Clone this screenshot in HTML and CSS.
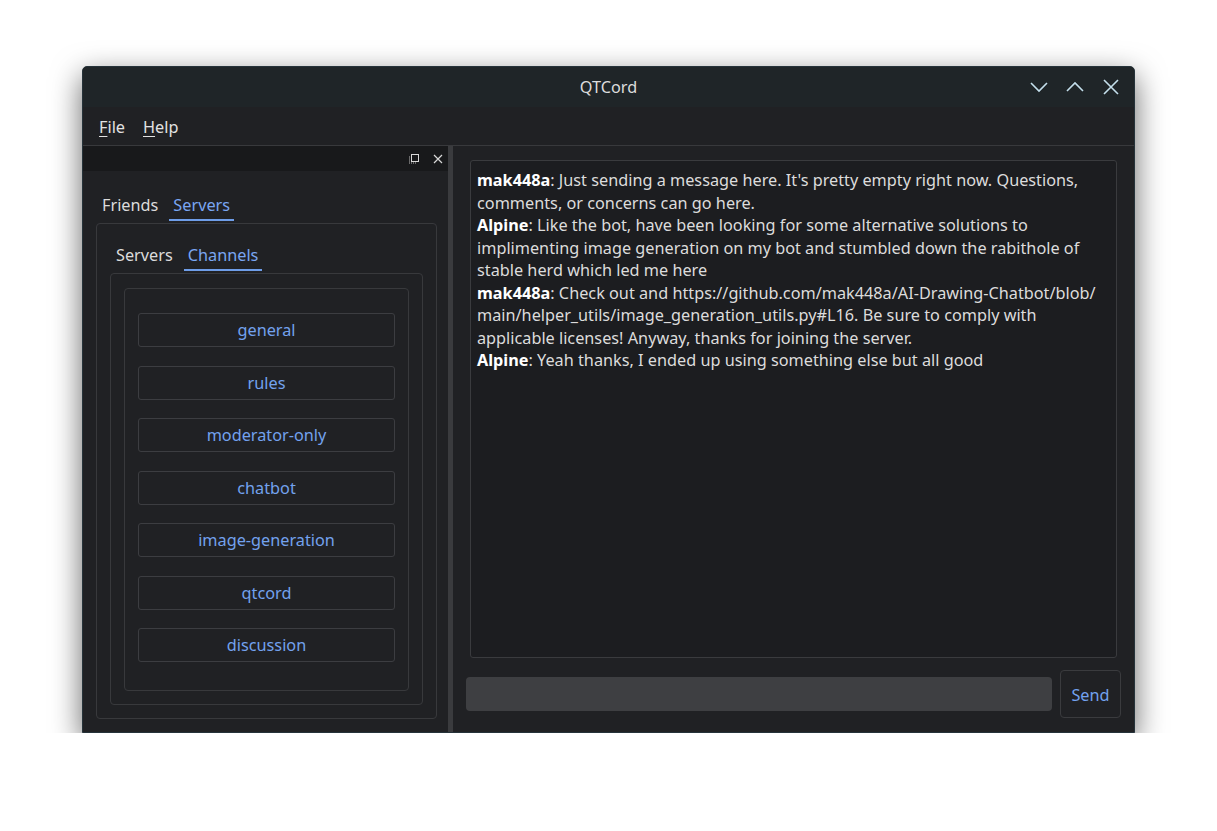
FILE: index.html
```html
<!DOCTYPE html>
<html>
<head>
<meta charset="utf-8">
<title>QTCord</title>
<link rel="stylesheet" href="styles.css">
</head>
<body>
<div class="window">
  <div class="titlebar">
    <div class="title">QTCord</div>
    <div class="wm-buttons">
      <svg class="wm" viewBox="0 0 20 20"><path d="M2 6 L10 14 L18 6" /></svg>
      <svg class="wm" viewBox="0 0 20 20"><path d="M2 14 L10 6 L18 14" /></svg>
      <svg class="wm" viewBox="0 0 20 20"><path d="M3 3 L17 17 M17 3 L3 17" /></svg>
    </div>
  </div>
  <div class="menubar">
    <span class="menu-item"><u>F</u>ile</span>
    <span class="menu-item"><u>H</u>elp</span>
  </div>
  <div class="content">
    <div class="dock">
      <div class="dock-title">
        <svg class="dock-icon" viewBox="0 0 12 12"><rect x="3.5" y="1.5" width="7" height="7" fill="none" stroke="#d8d8d8" stroke-width="1"/><path d="M1 4h1M1 6h1M1 8h1M1 10h1M3 10h1M5 10h1M7 10h1" stroke="#bbb" stroke-width="1"/></svg>
        <svg class="dock-icon" viewBox="0 0 12 12"><path d="M2 2 L10 10 M10 2 L2 10" stroke="#d8d8d8" stroke-width="1.2"/></svg>
      </div>
      <div class="dock-body">
        <div class="tabbar">
          <span class="tab">Friends</span>
          <span class="tab active">Servers</span>
        </div>
        <div class="pane outer">
          <div class="tabbar inner-tabbar">
            <span class="tab">Servers</span>
            <span class="tab active">Channels</span>
          </div>
          <div class="pane inner">
            <div class="channel-frame">
              <div class="channel">general</div>
              <div class="channel">rules</div>
              <div class="channel">moderator-only</div>
              <div class="channel">chatbot</div>
              <div class="channel">image-generation</div>
              <div class="channel">qtcord</div>
              <div class="channel">discussion</div>
            </div>
          </div>
        </div>
      </div>
    </div>
    <div class="splitter"></div>
    <div class="chat">
      <div class="messages">
        <b>mak448a</b>: Just sending a message here. It's pretty empty right now. Questions,<br>
        comments, or concerns can go here.<br>
        <b>Alpine</b>: Like the bot, have been looking for some alternative solutions to<br>
        implimenting image generation on my bot and stumbled down the rabithole of<br>
        stable herd which led me here<br>
        <b>mak448a</b>: Check out and https://github.com/mak448a/AI-Drawing-Chatbot/blob/<br>
        main/helper_utils/image_generation_utils.py#L16. Be sure to comply with<br>
        applicable licenses! Anyway, thanks for joining the server.<br>
        <b>Alpine</b>: Yeah thanks, I ended up using something else but all good
      </div>
      <div class="input-row">
        <div class="input"></div>
        <div class="send">Send</div>
      </div>
    </div>
  </div>
</div>
</body>
</html>
```

FILE: styles.css
```css
* { box-sizing: border-box; }
html, body { margin: 0; padding: 0; background: #ffffff; }
body {
  padding: 66px 0 0 82px;
  font-family: "Noto Sans", "Open Sans", sans-serif;
  font-size: 16.25px;
  color: #dedede;
}
.window {
  width: 1053px;
  height: 667px;
  border: 1px solid #26333a;
  border-radius: 5px 5px 0 0;
  background: #202124;
  display: flex;
  flex-direction: column;
  box-shadow: 0 10px 30px rgba(0, 0, 0, 0.6);
  overflow: hidden;
}
.titlebar {
  height: 40px;
  background: #1f2528;
  display: flex;
  align-items: center;
  justify-content: center;
  position: relative;
  flex: none;
}
.title { color: #dcdcdc; }
.wm-buttons {
  position: absolute;
  right: 13px;
  top: 10px;
  display: flex;
  gap: 16px;
}
.wm {
  width: 20px;
  height: 20px;
  fill: none;
  stroke: #c4dfec;
  stroke-width: 1.6;
}
.menubar {
  height: 39px;
  flex: none;
  display: flex;
  align-items: center;
  padding: 2px 0 0 8px;
  gap: 2px;
  border-bottom: 1px solid #38393c;
}
.menu-item { padding: 0 8px; color: #e2e2e2; }
.menu-item u { text-decoration-thickness: 1px; text-underline-offset: 3px; }
.content { flex: 1; display: flex; min-height: 0; }
.dock { width: 365px; display: flex; flex-direction: column; }
.dock-title {
  height: 25px;
  background: #18191b;
  display: flex;
  justify-content: flex-end;
  align-items: center;
  gap: 12px;
  padding-right: 4px;
}
.dock-icon { width: 12px; height: 12px; }
.dock-body {
  flex: 1;
  display: flex;
  flex-direction: column;
  padding: 16px 11px 13px 13px;
}
.tabbar { display: flex; gap: 7px; padding-left: 2px; height: 36px; flex: none; }
.tab {
  padding: 5px 4px 0 4px;
  line-height: 27px;
  color: #dcdcdc;
  border-bottom: 2px solid transparent;
  height: 34px;
}
.tab.active { color: #7aa6f2; border-bottom-color: #6e9de8; }
.pane {
  border: 1px solid #38393c;
  border-radius: 4px;
  display: flex;
  flex-direction: column;
}
.pane.outer { flex: 1; padding: 13px 13px 13px 13px; }
.inner-tabbar { padding-left: 2px; }
.pane.inner { flex: 1; padding: 14px 13px 13px 13px; }
.channel-frame {
  flex: 1;
  border: 1px solid #38393c;
  border-radius: 4px;
  padding: 24px 13px 0 13px;
  display: flex;
  flex-direction: column;
  gap: 18.5px;
}
.channel {
  height: 34px;
  border: 1px solid #3c3d41;
  border-radius: 3px;
  display: flex;
  align-items: center;
  justify-content: center;
  color: #73a2ee;
}
.splitter { width: 5px; background: #3a3b3e; flex: none; }
.chat {
  flex: 1;
  display: flex;
  flex-direction: column;
  padding: 14px 13px 14px 13px;
}
.messages {
  flex: 1;
  margin: 0 4px 12px 4px;
  border: 1px solid #3a3b3e;
  border-radius: 3px;
  background: #1c1d20;
  padding: 8px 6px 6px 6px;
  line-height: 22.5px;
  white-space: nowrap;
  color: #dcdcdc;
}
.messages b { color: #ffffff; font-weight: 700; }
.input-row { height: 48px; display: flex; align-items: center; gap: 8px; flex: none; }
.input { flex: 1; height: 34px; background: #3e3f42; border-radius: 4px; }
.send {
  width: 61px;
  height: 48px;
  border: 1px solid #3a3b3e;
  border-radius: 4px;
  display: flex;
  align-items: center;
  justify-content: center;
  color: #73a2ee;
  padding-top: 1px;
}
```
